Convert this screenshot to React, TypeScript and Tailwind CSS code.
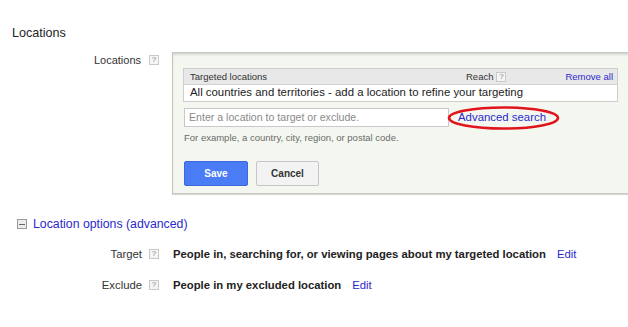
export default function App() {
  const Q = () => (
    <span className="shrink-0 inline-flex items-center justify-center w-[10px] h-[10px] border border-[#c9c9c9] bg-[#f5f5f5] text-[8px] leading-none text-[#888]">
      ?
    </span>
  );
  return (
    <div className="relative w-[628px] h-[327px] overflow-hidden bg-white text-[#222] font-['Liberation_Sans',Arial,sans-serif]">
      <div className="pl-[12px] pt-[25px] text-[12.6px] leading-[16px] text-[#222]">Locations</div>

      <div className="mt-[11px] flex items-start w-[700px]">
        <div className="shrink-0 w-[141px] mt-[1px] text-right text-[11px] leading-[14px] text-[#333]">Locations</div>
        <div className="shrink-0 ml-[8px] mt-[3px] flex">
          <Q />
        </div>
        <div className="shrink-0 ml-[13px] w-[470px] bg-[#f3f7f0] border border-[#c2c9be] shadow-[inset_0_2px_2px_rgba(0,0,0,0.12),0_1px_1px_rgba(0,0,0,0.15)] pt-[15px] pl-[10px] pb-[7px]">
          <div className="w-[435px] border border-[#cdcdcd]">
            <div className="h-[16px] bg-[#e8e8e8] border-b border-[#d2d2d2] flex items-center pl-[6px] pr-[4px] text-[9.5px] leading-none text-[#333]">
              <span>Targeted locations</span>
              <span className="ml-auto">Reach</span>
              <span className="ml-[3px] flex">
                <Q />
              </span>
              <span className="ml-[59px] text-[#2a2acc]">Remove all</span>
            </div>
            <div className="h-[16px] bg-white flex items-center px-[6px] text-[11.4px] leading-none text-[#222]">
              All countries and territories - add a location to refine your targeting
            </div>
          </div>
          <div className="mt-[6px] flex items-center">
            <div className="shrink-0 ml-[1px] w-[265px] h-[19px] border border-[#c8c8c8] bg-white pl-[4px] flex items-center text-[10.6px] leading-none text-[#8a8a8a]">
              Enter a location to target or exclude.
            </div>
            <span className="ml-[9px] text-[11.4px] leading-none text-[#2a2acc]">Advanced search</span>
          </div>
          <div className="mt-[5px] ml-[1px] text-[9.5px] leading-[11px] text-[#6a6a6a]">
            For example, a country, city, region, or postal code.
          </div>
          <div className="mt-[18px] ml-[1px] flex">
            <div className="w-[64px] h-[25px] bg-[#4a7cf6] border border-[#3b68dc] rounded-[2px] flex items-center justify-center text-white font-bold text-[10px]">
              Save
            </div>
            <div className="ml-[8px] w-[63px] h-[25px] bg-[#f3f3f3] border border-[#c6c6c6] rounded-[2px] flex items-center justify-center text-[#333] font-bold text-[10px]">
              Cancel
            </div>
          </div>
        </div>
      </div>

      <div className="mt-[23px] ml-[17px] flex items-center h-[14px]">
        <span className="relative w-[10px] h-[10px] border border-[#9a9a9a] bg-[#ececec] flex items-center justify-center">
          <span className="w-[6px] h-[1px] bg-[#666]" />
        </span>
        <span className="ml-[6px] text-[12.3px] leading-[14px] text-[#2a2acc]">Location options (advanced)</span>
      </div>

      <div className="mt-[16px] flex items-center h-[14px]">
        <div className="shrink-0 w-[142px] text-right text-[11.3px] text-[#333]">Target</div>
        <div className="shrink-0 ml-[7px] flex">
          <Q />
        </div>
        <div className="shrink-0 ml-[14px] text-[11.3px] font-bold text-[#222]">
          People in, searching for, or viewing pages about my targeted location
        </div>
        <div className="shrink-0 ml-[11px] text-[11.3px] text-[#2a2acc]">Edit</div>
      </div>

      <div className="mt-[17px] flex items-center h-[14px]">
        <div className="shrink-0 w-[142px] text-right text-[11.3px] text-[#333]">Exclude</div>
        <div className="shrink-0 ml-[7px] flex">
          <Q />
        </div>
        <div className="shrink-0 ml-[14px] text-[11.3px] font-bold text-[#222]">People in my excluded location</div>
        <div className="shrink-0 ml-[11px] text-[11.3px] text-[#2a2acc]">Edit</div>
      </div>

      <svg className="absolute left-[447px] top-[106px]" width="113" height="24" viewBox="0 0 113 24">
        <ellipse cx="56.5" cy="12" rx="54.5" ry="10.5" fill="none" stroke="#e1141c" strokeWidth="2.6" />
      </svg>
    </div>
  );
}
